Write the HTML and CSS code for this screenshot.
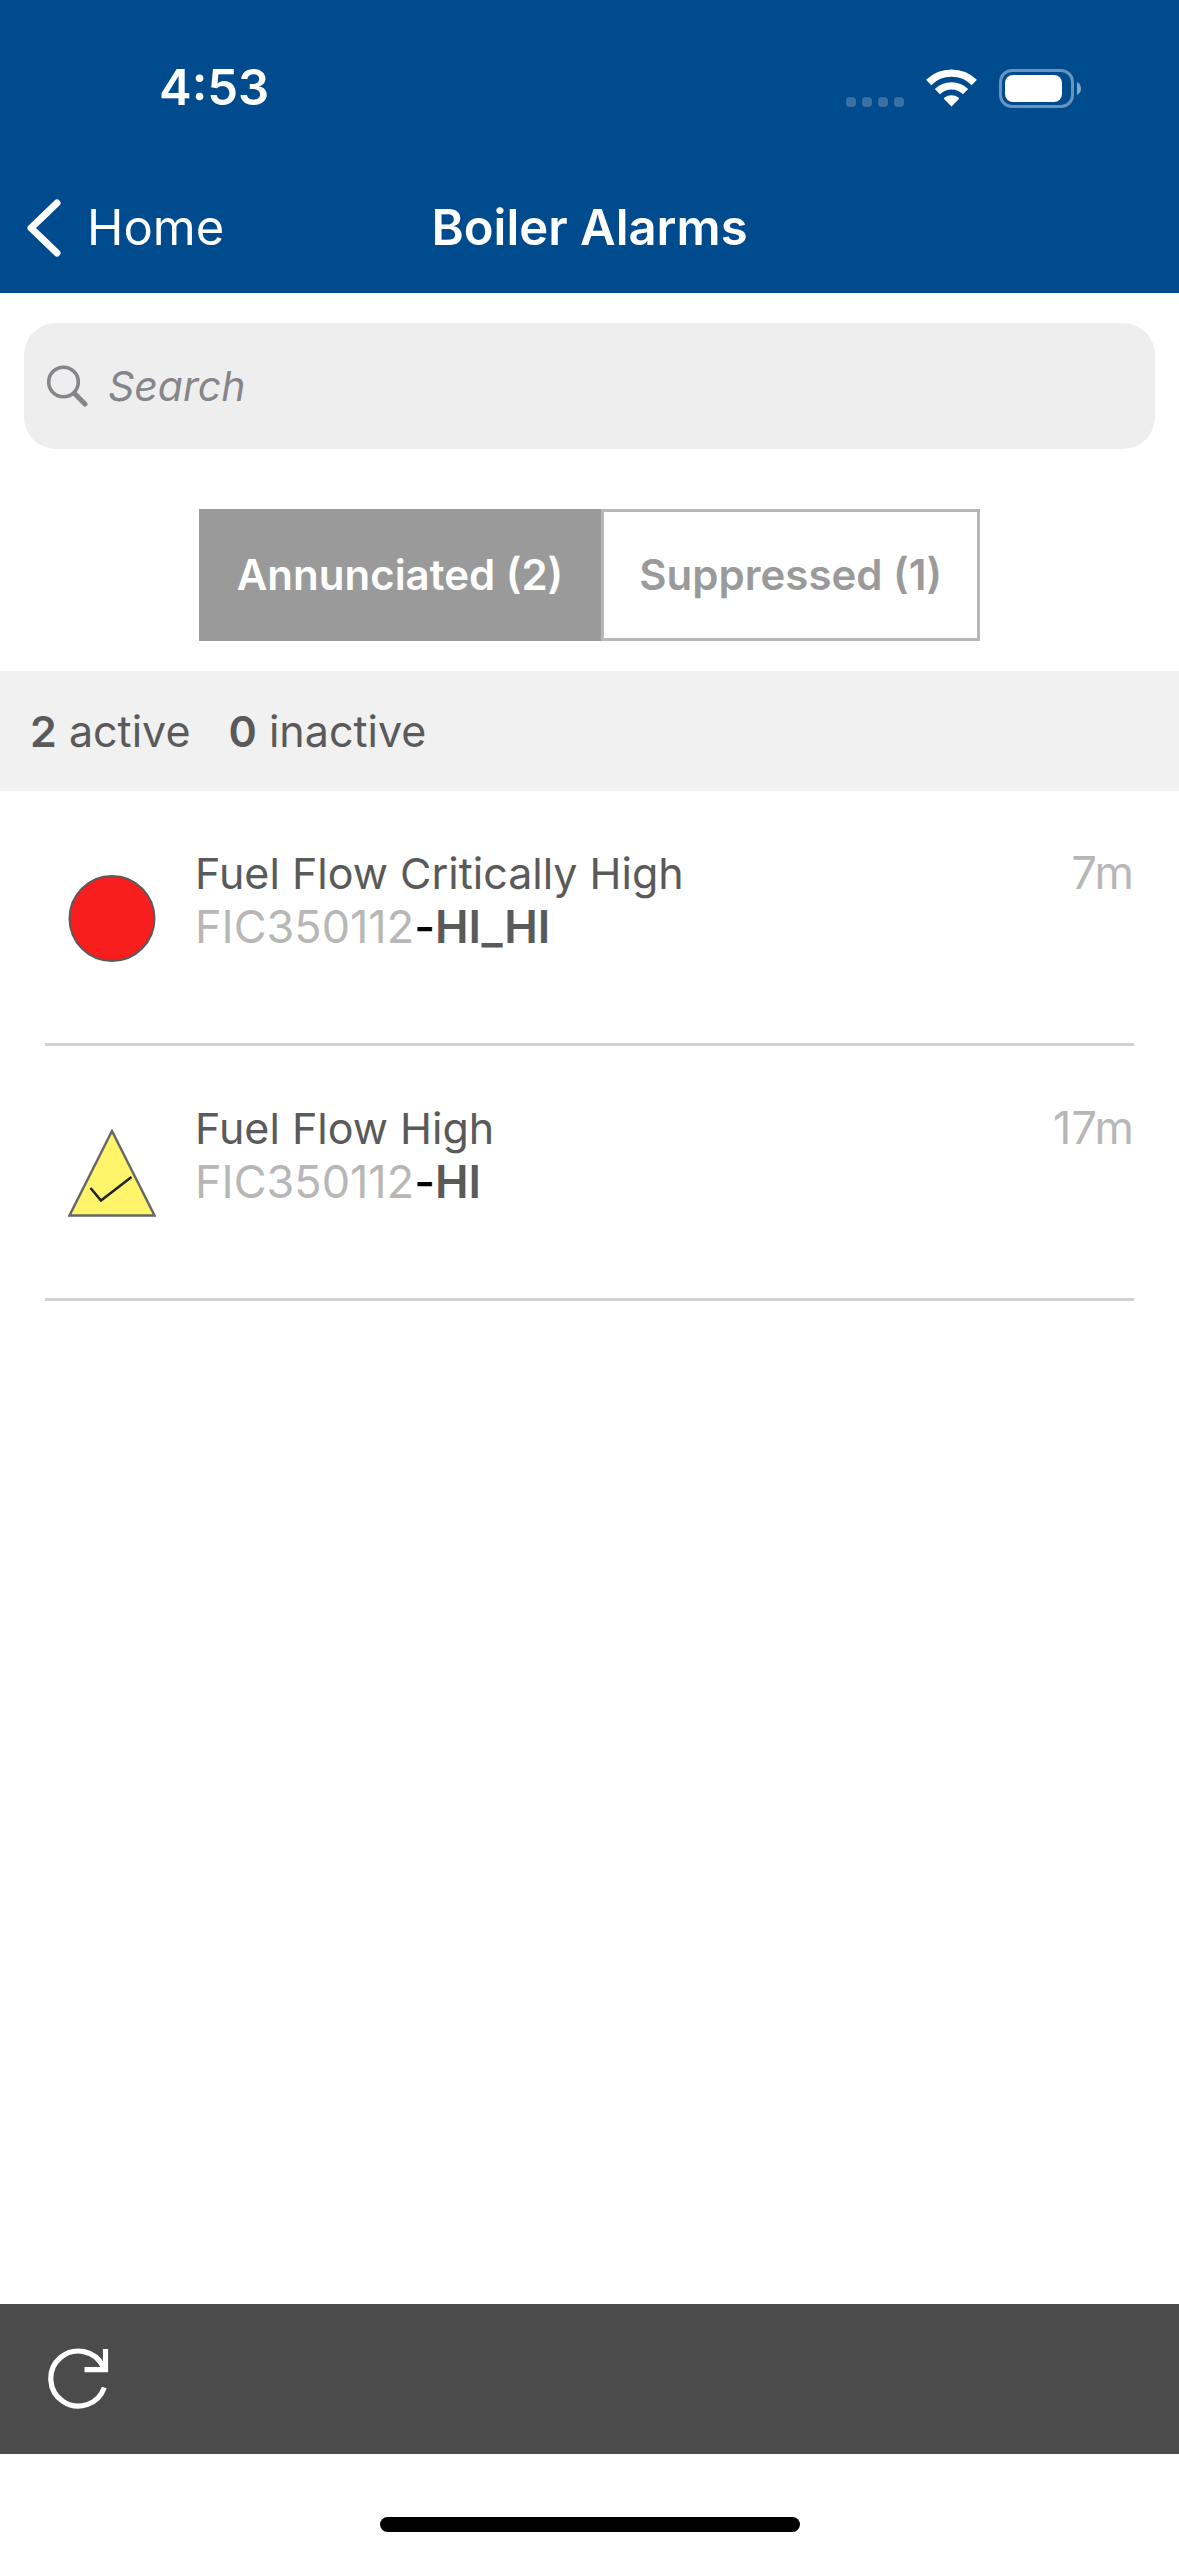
FILE: index.html
```html
<!DOCTYPE html>
<html lang="en">
<head>
<meta charset="utf-8">
<meta name="viewport" content="width=device-width, initial-scale=1">
<title>Boiler Alarms</title>
<link rel="stylesheet" href="styles.css">
</head>
<body>
<div class="app">
  <header class="header">
    <div class="status">
      <time class="clock">4:53</time>
      <div class="status-icons">
        <svg class="signal" width="58" height="38" viewBox="0 0 58 38" aria-hidden="true">
          <rect y="28" width="10" height="10" rx="4"/><rect x="16" y="28" width="10" height="10" rx="4"/><rect x="32" y="28" width="10" height="10" rx="4"/><rect x="48" y="28" width="10" height="10" rx="4"/>
        </svg>
        <svg class="wifi" width="51" height="38" viewBox="0 0 51 38" aria-hidden="true">
          <path fill="none" stroke="#fff" stroke-width="7.4" d="M2.7 13.5a32.5 32.5 0 0 1 45.6 0M11.4 22.6a20.2 20.2 0 0 1 28.2 0"/>
          <path fill="#fff" d="M25.5 37.5 18.3 30.3q-.9-.9.2-1.7a12 12 0 0 1 14 0q1.100.8.2 1.700z"/>
        </svg>
        <svg class="battery" width="82" height="39" viewBox="0 0 82 39" aria-hidden="true">
          <rect x="1.500" y="1.500" width="72" height="36" rx="11.500" fill="none" stroke="#6694bd" stroke-width="3"/>
          <rect x="6" y="6" width="57" height="27" rx="8" fill="#fff"/>
          <path fill="#80a6c8" d="M78 13q4 2 4 6.500t-4 6.500z"/>
        </svg>
      </div>
    </div>
    <nav class="nav">
      <a class="back" href="#home">
        <svg width="34" height="58" viewBox="0 0 34 58" aria-hidden="true"><path d="M30 4 4 29l26 25" fill="none" stroke="#fff" stroke-width="7" stroke-linecap="round" stroke-linejoin="round"/></svg>
        <span>Home</span>
      </a>
      <h1 class="title">Boiler Alarms</h1>
    </nav>
  </header>

  <main class="main">
    <label class="search">
      <svg width="41" height="42" viewBox="0 0 41 42" aria-hidden="true"><g fill="none" stroke="#86868a" stroke-linecap="round"><circle cx="16.500" cy="17" r="14.800" stroke-width="3.600"/><path d="M28 29l10 10" stroke-width="5"/></g></svg>
      <input class="search-input" type="search" placeholder="Search" aria-label="Search">
    </label>

    <div class="segments" role="group" aria-label="Alarm type">
      <button class="segment segment-on" type="button" aria-pressed="true">Annunciated (2)</button>
      <button class="segment" type="button" aria-pressed="false">Suppressed (1)</button>
    </div>

    <p class="summary"><span><b>2</b> active</span><span><b>0</b> inactive</span></p>

    <ul class="alarms">
      <li class="alarm">
        <svg class="alarm-icon" width="88" height="88" viewBox="0 0 88 88" role="img" aria-label="Critical"><circle cx="44" cy="44.500" r="42.500" fill="#f91e1e" stroke="#5a5a5a" stroke-width="2"/></svg>
        <div class="alarm-text">
          <div class="name">Fuel Flow Critically High</div>
          <div><span class="tag">FIC350112</span><span class="dash">-</span><b>HI_HI</b></div>
        </div>
        <time class="age">7m</time>
      </li>
      <li class="alarm">
        <svg class="alarm-icon" width="88" height="88" viewBox="0 0 88 88" role="img" aria-label="High, acknowledged"><path d="M44 2 86.500 86.500H1.500z" fill="#fff46a" stroke="#666" stroke-width="2.400"/><path d="M22.500 59 33 71.500 63.500 48" fill="none" stroke="#222" stroke-width="2.600"/></svg>
        <div class="alarm-text">
          <div class="name">Fuel Flow High</div>
          <div><span class="tag">FIC350112</span><span class="dash">-</span><b>HI</b></div>
        </div>
        <time class="age">17m</time>
      </li>
    </ul>
  </main>

  <footer>
    <div class="toolbar">
      <button class="refresh" type="button" aria-label="Refresh">
        <svg width="62" height="62" viewBox="0 0 62 62" aria-hidden="true"><path fill="none" stroke="#fff" stroke-width="5.200" d="M56.300 39.500A27.500 27.500 0 1 1 55 18.500M57.500 1V21.600M36.500 21.600H60.100"/></svg>
      </button>
    </div>
    <div class="home-area"><div class="home-bar"></div></div>
  </footer>
</div>
</body>
</html>
```

FILE: styles.css
```css
* {
  box-sizing: border-box;
}

body {
  margin: 0;
  background: #fff;
  color: #5a5a5a;
  font-family: Inter, "Liberation Sans", sans-serif;
  font-size: 45px;
  line-height: 54px;
}

svg {
  display: block;
  flex: none;
}

.app {
  display: flex;
  flex-direction: column;
  min-height: 100vh;
}

.header {
  background: #004b8d;
  color: #fff;
  font-size: 49px;
}

.status {
  display: flex;
  align-items: center;
  justify-content: space-between;
  height: 162px;
  padding: 14px 98px 0 159px;
}

.clock {
  font-weight: 600;
}

.status-icons {
  display: flex;
  align-items: center;
  gap: 22px;
}

.signal {
  fill: #3a71a5;
}

.nav {
  display: grid;
  grid-template-columns: 1fr auto 1fr;
  align-items: center;
  height: 131px;
  padding: 0 27px;
}

.back {
  display: flex;
  align-items: center;
  gap: 26px;
  color: #fff;
  text-decoration: none;
}

.title {
  margin: 0;
  font-size: inherit;
  font-weight: 600;
}

.main {
  flex: 1;
}

.search {
  display: flex;
  align-items: center;
  gap: 20px;
  height: 126px;
  margin: 30px 24px 60px;
  padding: 0 23px;
  border-radius: 32px;
  background: #eee;
}

.search-input {
  flex: 1;
  min-width: 0;
  padding: 0;
  border: 0;
  outline: 0;
  background: transparent;
  color: #5a5a5a;
  font: inherit;
  font-size: 41px;
}

.search-input::placeholder {
  color: #86868a;
  font-style: italic;
  opacity: 1;
}

.segments {
  display: flex;
  justify-content: center;
}

.segment {
  height: 132px;
  padding: 0 35px;
  border: 3px solid #b7b7b7;
  background: #fff;
  color: #9a9a9a;
  font: inherit;
  font-size: 42px;
  font-weight: 600;
}

.segment-on {
  border-color: #9a9a9a;
  background: #9a9a9a;
  color: #fff;
}

.summary {
  display: flex;
  gap: 38px;
  margin: 30px 0 0;
  padding: 33px 30px;
  background: #f1f1f1;
  font-size: 43px;
}

b {
  font-weight: 600;
}

.alarms {
  margin: 0;
  padding: 0 45px;
  list-style: none;
}

.alarm {
  display: flex;
  align-items: flex-start;
  height: 255px;
  padding-top: 55px;
  border-bottom: 3px solid #d1d1d1;
}

.alarm-icon {
  margin: 28px 39px 0 23px;
}

.alarm-text {
  flex: 1;
}

.name {
  font-size: 43px;
}

.tag,
.age {
  color: #b7b7b7;
}

.dash {
  color: #000;
  font-weight: 500;
}

.toolbar {
  display: flex;
  align-items: center;
  height: 150px;
  padding: 0 48px;
  background: #4b4b4b;
}

.refresh {
  padding: 0;
  border: 0;
  background: none;
}

.home-area {
  display: flex;
  justify-content: center;
  padding: 63px 0 24px;
}

.home-bar {
  width: 420px;
  height: 15px;
  border-radius: 8px;
  background: #000;
}
```
